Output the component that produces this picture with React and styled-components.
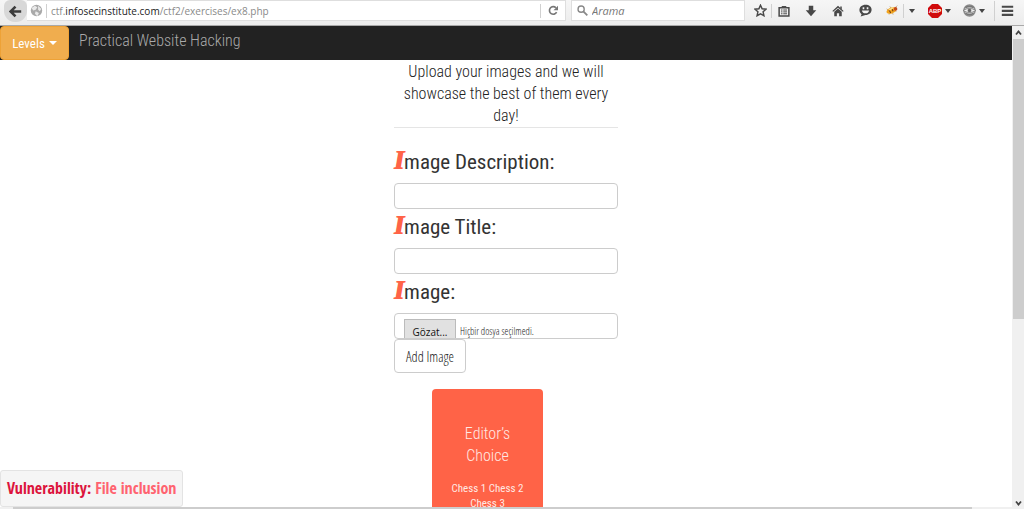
import React from "react";
import styled, { createGlobalStyle } from "styled-components";

const body = `"Roboto Condensed", sans-serif`;
const light = `"Open Sans Condensed Light", "Roboto Condensed", sans-serif`;
const display = `"Open Sans Condensed", "Roboto Condensed", sans-serif`;

const GlobalStyle = createGlobalStyle`
  * {
    box-sizing: border-box;
  }

  body {
    margin: 0;
    overflow: hidden;
    background: #fff;
    color: #222;
    font-family: ${body};
    font-weight: 300;
  }
`;

const Screen = styled.div`
  display: flex;
  flex-direction: column;
  height: 100vh;
`;

const Toolbar = styled.header`
  display: flex;
  align-items: stretch;
  flex: none;
  height: 26px;
  padding-left: 4px;
  padding-bottom: 4px;
  background: linear-gradient(#f6f6f6, #ececec);
  border-bottom: 1px solid #a9a9a9;
`;

const BackButton = styled.button`
  display: flex;
  align-items: center;
  justify-content: center;
  flex: none;
  width: 23px;
  height: 22px;
  padding: 0;
  border: 0;
  border-radius: 6px 6px 11px 11px;
  background: #d8d8d8;
`;

const AddressBar = styled.form`
  display: flex;
  align-items: center;
  flex: 1;
  min-width: 0;
  padding-left: 3px;
  border: 1px solid #dedede;
  border-left: 0;
  background: #fff;
`;

const Divider = styled.span`
  flex: none;
  width: 1px;
  height: ${(props) => (props.$tall ? 20 : 14)}px;
  margin: 0 ${(props) => props.$gap || 0}px;
  background: #d0d0d0;
`;

const Url = styled.a`
  flex: 1;
  padding-left: 1px;
  color: #8a8a8a;
  font: 10px "Open Sans", sans-serif;
  text-decoration: none;
  white-space: nowrap;

  b {
    color: #222;
    font-weight: 400;
  }
`;

const IconButton = styled.button`
  display: flex;
  align-items: center;
  justify-content: center;
  gap: 3px;
  flex: none;
  width: ${(props) => props.$width}px;
  height: 20px;
  padding: 0;
  border: 0;
  background: none;
  color: #484848;
`;

const SearchBox = styled.label`
  display: flex;
  align-items: center;
  gap: 4px;
  flex: none;
  width: 174px;
  margin-left: 5px;
  padding-left: 5px;
  border: 1px solid #dedede;
  background: #fff;
`;

const SearchInput = styled.input`
  flex: 1;
  min-width: 0;
  padding: 0;
  border: 0;
  outline: 0;
  background: none;
  font: italic 11px "Open Sans", sans-serif;

  &::placeholder {
    color: #777;
    opacity: 1;
  }
`;

const Actions = styled.div`
  display: flex;
  align-items: center;
  flex: none;
  width: 279px;
  padding-left: 4px;
`;

const Viewport = styled.div`
  display: flex;
  flex: 1;
  min-height: 0;
`;

const Page = styled.div`
  display: flex;
  flex-direction: column;
  flex: 1;
  min-width: 0;
  position: relative;
`;

const Navbar = styled.nav`
  display: flex;
  flex: none;
  height: 34px;
  background: #222;
`;

const LevelsButton = styled.button`
  display: flex;
  align-items: center;
  justify-content: center;
  gap: 4px;
  width: 69px;
  padding: 0;
  border: 1px solid #eea236;
  border-radius: 4px;
  background: #f0ad4e;
  color: #fff;
  font: 400 13px ${body};
`;

const Caret = styled.span`
  border-top: 4px solid;
  border-right: 4px solid transparent;
  border-left: 4px solid transparent;
`;

const Brand = styled.a`
  padding-left: 10px;
  color: #aaa;
  font-size: 16px;
  line-height: 30px;
  text-decoration: none;
`;

const Content = styled.main`
  flex: 1;
  min-height: 0;
  overflow: hidden;
`;

const Column = styled.div`
  width: 224px;
  margin: 0 auto;
`;

const Intro = styled.p`
  margin: 0 0 18px;
  padding: 1px 6px 0;
  border-bottom: 1px solid #e5e5e5;
  font-size: 16px;
  line-height: 22px;
  text-align: center;
`;

const FieldLabel = styled.label`
  display: block;
  height: 37px;
  color: #333;
  font: 400 21px/33px ${body};
  white-space: nowrap;

  &::first-letter {
    color: #ff6347;
    font: italic bold 24px "DejaVu Serif Condensed", "DejaVu Serif", serif;
    text-shadow: 1px 0 #ff6347;
  }
`;

const Field = styled.div`
  height: 65px;
`;

const TextInput = styled.input`
  display: block;
  width: 100%;
  height: 26px;
  padding: 4px 9px;
  border: 1px solid #ccc;
  border-radius: 4px;
  font: 300 12px ${light};
`;

const FileBox = styled.label`
  display: flex;
  gap: 4px;
  height: 26px;
  padding: 5px 9px 0;
  border: 1px solid #ccc;
  border-radius: 4px;
  overflow: hidden;
  color: #222;
  font: 300 10px/25px ${light};

  input {
    position: absolute;
    width: 1px;
    height: 1px;
    opacity: 0;
  }
`;

const Browse = styled.span`
  width: 52px;
  height: 26px;
  border: 1px solid #bbb;
  background: #e1e1e1;
  color: #111;
  font: 10px/24px "Open Sans", sans-serif;
  text-align: center;
`;

const AddButton = styled.button`
  display: block;
  height: 34px;
  padding: 0 11px;
  border: 1px solid #ccc;
  border-radius: 4px;
  background: #fff;
  color: #222;
  font: 300 14px ${light};
`;

const Card = styled.section`
  width: 111px;
  margin: 16px 0 0 38px;
  padding: 34px 16px;
  border-radius: 4px;
  background: #ff6347;
  color: #ffe9e4;
  text-align: center;
`;

const CardTitle = styled.h2`
  margin: 0 0 14px;
  font-size: 16px;
  font-weight: 300;
  line-height: 22px;
`;

const CardText = styled.p`
  margin: 0;
  font-size: 11px;
  font-weight: 400;
  line-height: 15px;
`;

const Badge = styled.div`
  position: absolute;
  bottom: 2px;
  left: 0;
  height: 37px;
  padding: 0 6px;
  border: 1px solid #e3e3e3;
  border-radius: 3px;
  background: #f5f5f5;
  color: #ff6370;
  font: bold 16px/34px ${display};
  white-space: nowrap;

  strong {
    color: #dc143c;
  }
`;

const BottomTrack = styled.div`
  flex: none;
  height: 2px;
  padding: 0 40px 0 13px;
  background: #f0f0f0;
`;

const BottomThumb = styled.div`
  height: 2px;
  background: #cdcdcd;
`;

const Scrollbar = styled.aside`
  display: flex;
  flex-direction: column;
  flex: none;
  width: 12px;
  padding-left: 1px;
  background: #f0f0f0;
`;

const ScrollThumb = styled.div`
  flex: none;
  height: 58%;
  background: #cdcdcd;
`;

const ScrollButton = styled.button`
  flex: none;
  display: flex;
  align-items: center;
  justify-content: center;
  height: 13px;
  margin-top: ${(props) => (props.$end ? "auto" : 0)};
  padding: 0;
  border: 0;
  background: none;
`;

const Icon = ({ size = 14, children }) => (
  <svg width={size} height={size} viewBox="0 0 16 16" fill="currentColor" aria-hidden="true">
    {children}
  </svg>
);

const Globe = () => (
  <Icon size={13}>
    <circle cx="8" cy="8" r="7" fill="#a9a9a9" />
    <path d="M2 5l4-3 3 2-2 3-3 1zM10 2l4 4-2 3-2-2zM7 9l4 2-2 4-3-3z" fill="#e9e9e9" />
  </Icon>
);

const DropArrow = () => (
  <svg width="6" height="4" viewBox="0 0 6 4" aria-hidden="true">
    <path d="M0 0h6L3 4z" fill="#444" />
  </svg>
);

const Bug = () => (
  <svg width="13" height="13" viewBox="0 0 16 16" aria-hidden="true">
    <path d="M2 6l3 2M6 3l2 3M13 4l2-2M5 13l1-3M10 13l-1-3M14 9l-3-1" stroke="#b59a70" />
    <ellipse cx="8" cy="8" rx="6.5" ry="3.5" transform="rotate(-22 8 8)" fill="#f2a51f" />
    <path d="M5 7l2 4M8 5l2 4" stroke="#7a3b10" strokeWidth="1.3" />
    <circle cx="13" cy="6" r="2.2" fill="#c4491d" />
    <path d="M4 7l5-3 2 1-5 3z" fill="#ffe08a" />
  </svg>
);

const Abp = () => (
  <svg width="14" height="14" viewBox="0 0 14 14" aria-hidden="true">
    <path d="M4 0h6l4 4v6l-4 4H4l-4-4V4z" fill="#d00b0b" />
    <text x="7" y="9" fill="#fff" fontFamily="Liberation Sans" fontSize="6" fontWeight="700" textAnchor="middle">
      ABP
    </text>
  </svg>
);

const Proxy = () => (
  <Icon size={13}>
    <circle cx="8" cy="8" r="6.8" fill="#d2d2d2" stroke="#8c8c8c" strokeWidth="1.8" />
    <path d="M3 4.5q5-3 10 0M3 11.5q5 3 10 0" fill="none" stroke="#777" strokeWidth="2" />
    <path d="M0 8q8-5 16 0-8 5-16 0z" fill="#eee" stroke="#777" />
    <circle cx="8" cy="8" r="2.2" fill="#666" />
  </Icon>
);

const Chevron = ({ up }) => (
  <svg width="7" height="6" viewBox="0 0 7 6" aria-hidden="true">
    <path d={up ? "M1 4.5l2.5-3 2.5 3" : "M1 1.5l2.5 3 2.5-3"} fill="none" stroke="#444" strokeWidth="1.8" />
  </svg>
);

const BrowserToolbar = () => (
  <Toolbar>
    <BackButton aria-label="Back">
      <Icon size={13}>
        <path d="M8 2L2 8l6 6M2.5 8H15" fill="none" stroke="#3c3c3c" strokeWidth="3.2" />
      </Icon>
    </BackButton>
    <AddressBar>
      <Globe />
      <Divider $gap={3} />
      <Url href="#">
        ctf.<b>infosecinstitute.com</b>/ctf2/exercises/ex8.php
      </Url>
      <Divider />
      <IconButton type="button" $width={24} aria-label="Reload">
        <Icon size={11}>
          <path d="M12.5 10.5A5.5 5.5 0 1 1 11.5 4" fill="none" stroke="#777" strokeWidth="2.4" />
          <path d="M14.5 1v6.5H8z" fill="#777" />
        </Icon>
      </IconButton>
    </AddressBar>
    <SearchBox>
      <Icon size={11}>
        <circle cx="6" cy="6" r="4.5" fill="none" stroke="#888" strokeWidth="2" />
        <path d="M9.5 9.5L15 15" stroke="#888" strokeWidth="2.6" />
      </Icon>
      <SearchInput placeholder="Arama" aria-label="Arama" />
    </SearchBox>
    <Actions>
      <IconButton $width={22} aria-label="Bookmark">
        <Icon size={13}>
          <path
            d="M8 1.5l2 4.4 4.8.5-3.6 3.2 1 4.8L8 12l-4.2 2.4 1-4.8L1.2 6.4 6 5.9z"
            fill="none"
            stroke="currentColor"
            strokeWidth="1.8"
          />
        </Icon>
      </IconButton>
      <Divider />
      <IconButton $width={24} aria-label="Bookmarks list">
        <Icon size={12}>
          <path d="M1.5 3.5h13v11h-13z" fill="none" stroke="currentColor" strokeWidth="2" />
          <path
            d="M5 2h6M4 6.7h2M7 6.7h5M4 9.2h2M7 9.2h5M4 11.7h2M7 11.7h5"
            stroke="currentColor"
            strokeWidth="1.3"
          />
        </Icon>
      </IconButton>
      <IconButton $width={30} aria-label="Downloads">
        <Icon size={12}>
          <path d="M5 1h6v6h4l-7 8-7-8h4z" />
        </Icon>
      </IconButton>
      <IconButton $width={24} aria-label="Home">
        <Icon size={12}>
          <path d="M8 1l7.5 7-1 1L8 3.5 1.5 9l-1-1z" />
          <path d="M3 9l5-4.3L13 9v6H9.5v-4h-3v4H3zM11 2h2v4l-2-2z" />
        </Icon>
      </IconButton>
      <IconButton $width={30} aria-label="Chat">
        <Icon size={13}>
          <path d="M8 1c4.5 0 7.5 2.6 7.5 6S12.5 13.5 8 13.5L2 15.5l1.2-3C1.5 11.5.5 9.5.5 7.5.5 3.8 3.5 1 8 1z" />
          <path d="M3.5 8h9c-.5 2.5-2.3 3.5-4.5 3.5S4 10.5 3.5 8zM4.5 4h2v2.5h-2zM9.5 4h2v2.5h-2z" fill="#f2f2f2" />
        </Icon>
      </IconButton>
      <IconButton $width={23} aria-label="Firebug">
        <Bug />
      </IconButton>
      <Divider />
      <IconButton $width={16} aria-label="Firebug menu">
        <DropArrow />
      </IconButton>
      <IconButton $width={38} aria-label="Adblock Plus">
        <Abp />
        <DropArrow />
      </IconButton>
      <IconButton $width={32} aria-label="Proxy">
        <Proxy />
        <DropArrow />
      </IconButton>
      <Divider $gap={4} $tall />
      <IconButton $width={16} aria-label="Menu">
        <Icon size={13}>
          <path d="M1 2h14v2.7H1zM1 7h14v2.7H1zM1 12h14v2.7H1z" />
        </Icon>
      </IconButton>
    </Actions>
  </Toolbar>
);

const fields = [
  ["description", "Image Description:"],
  ["title", "Image Title:"],
];

const App = () => (
  <Screen>
    <GlobalStyle />
    <BrowserToolbar />
    <Viewport>
      <Page>
        <Navbar>
          <LevelsButton>
            Levels <Caret />
          </LevelsButton>
          <Brand href="#">Practical Website Hacking</Brand>
        </Navbar>
        <Content>
          <Column>
            <Intro>Upload your images and we will showcase the best of them every day!</Intro>
            {fields.map(([id, label]) => (
              <Field key={id}>
                <FieldLabel htmlFor={id}>{label}</FieldLabel>
                <TextInput id={id} type="text" />
              </Field>
            ))}
            <FieldLabel htmlFor="file">Image:</FieldLabel>
            <FileBox>
              <input id="file" type="file" />
              <Browse>Gözat...</Browse>
              Hiçbir dosya seçilmedi.
            </FileBox>
            <AddButton>Add Image</AddButton>
            <Card>
              <CardTitle>Editor’s Choice</CardTitle>
              <CardText>Chess 1 Chess 2 Chess 3</CardText>
            </Card>
          </Column>
        </Content>
        <Badge>
          <strong>Vulnerability:</strong> File inclusion
        </Badge>
        <BottomTrack>
          <BottomThumb />
        </BottomTrack>
      </Page>
      <Scrollbar>
        <ScrollButton aria-label="Scroll up">
          <Chevron up />
        </ScrollButton>
        <ScrollThumb />
        <ScrollButton $end aria-label="Scroll down">
          <Chevron />
        </ScrollButton>
      </Scrollbar>
    </Viewport>
  </Screen>
);

export default App;
